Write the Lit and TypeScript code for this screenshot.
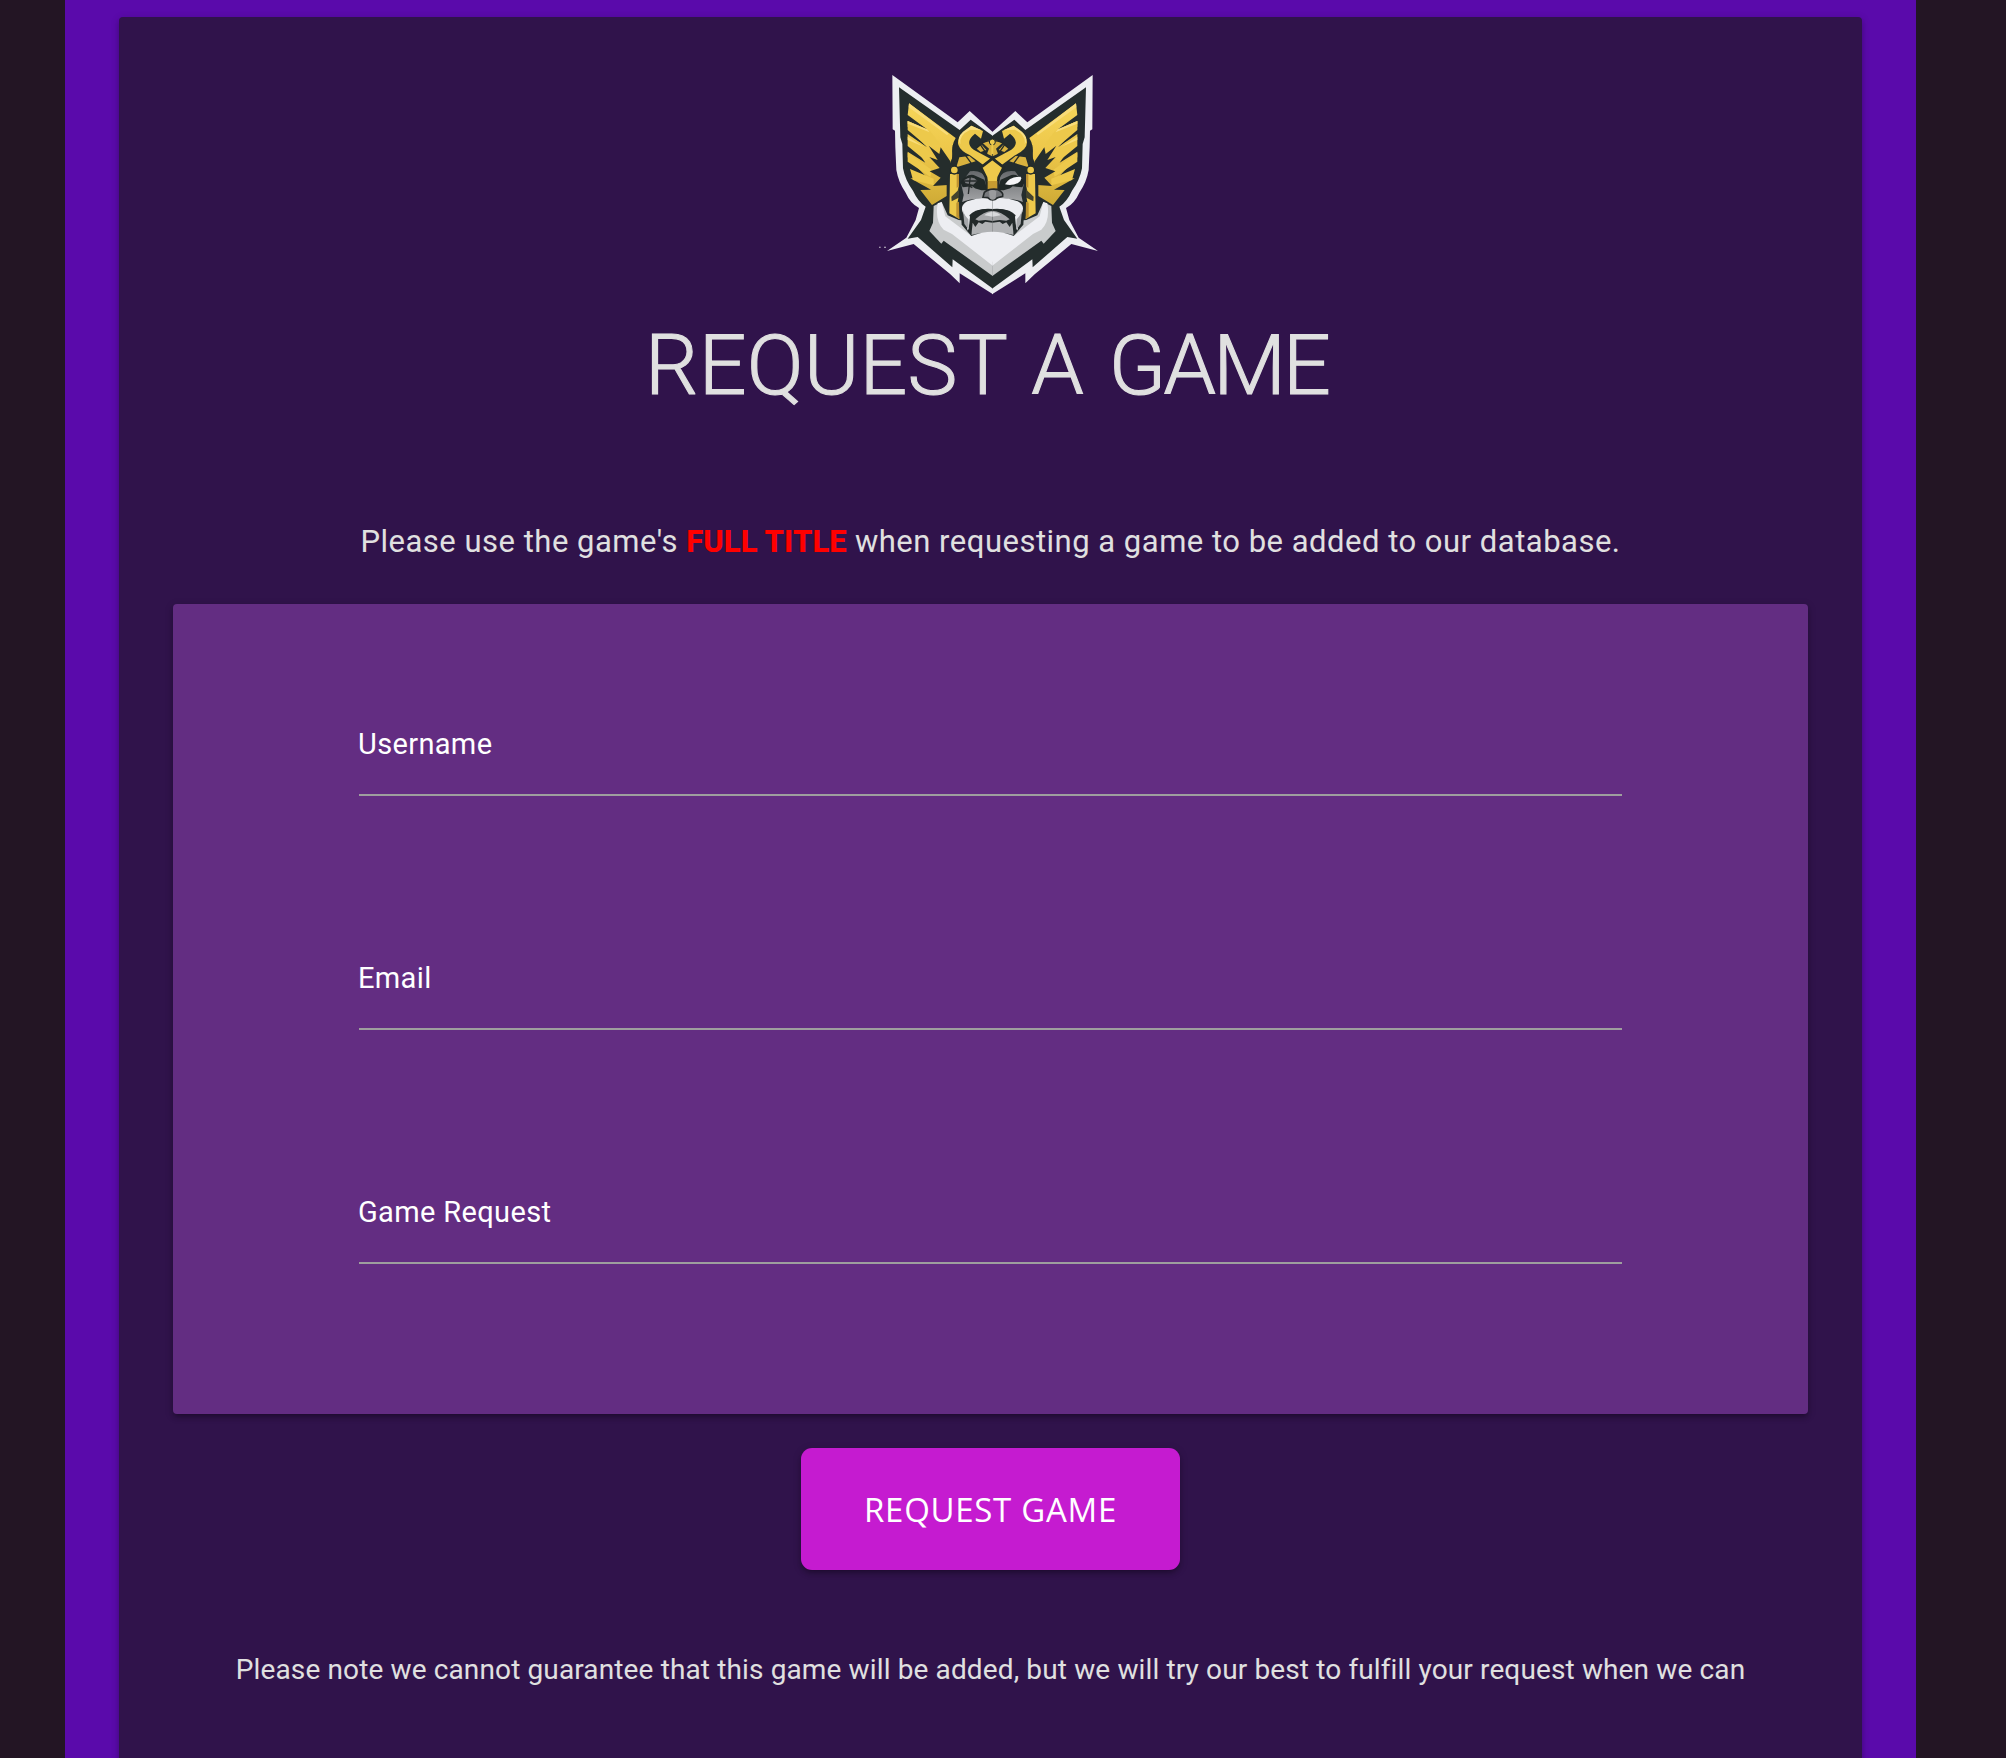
import { LitElement, html, css, svg } from "lit";
import { customElement, property } from "lit/decorators.js";

@customElement("warrior-logo")
export class WarriorLogo extends LitElement {
  static styles = css`
    :host { display: block; width: 240px; height: 250px; }
    svg { display: block; }
  `;

  private side() {
    return svg`
      <path fill="#edeef2" d="M368 217 L298 153 L262 187 L66 45 L67 208 L74 212 L75 262 L78 330 Q84 366 106 398 Q120 430 146 444 L136 480 L108 533 L50 573 L130 552 L240 643 L268 670 L268 640 L368 703 Z"/>
      <path fill="#242d2d" d="M368 228 L350 215 L301 179 L268 210 L86 82 L90 232 L96 252 L98 325 Q105 362 128 392 Q143 425 166 440 L152 480 L112 536 L142 531 L246 622 L247 598 L368 686 Z"/>
      <path fill="url(#gold)" d="M116 130 L256 234 Q241 258 247 290 L236 318 L229 340 L229 408 L185 435 L150 390 L182 389 L120 355 L172 355 L112 292 L112 275 L165 308 L112 230 L112 222 L170 262 L112 200 L112 183 L170 208 L112 165 Z"/>
      <path fill="#edc94b" d="M112 183 L180 214 L210 255 L165 255 L112 210 Z M112 230 L150 248 L188 288 L166 302 L112 258 Z M112 278 L185 330 L180 350 L112 305 Z M119 327 L190 356 L190 376 L128 360 Z"/>
      <path fill="#f8dc79" d="M116 130 L235 221 L230 225 L115 142 Z M112 183 L170 208 L178 217 L112 191 Z M112 230 L160 260 L112 240 Z"/>
      <path fill="#252d2c" d="M175 257 L207 282 L211 262 L240 304 L243 325 L233 354 L232 375 L188 378 L211 353 L178 334 L208 324 L177 291 L202 300 Z"/>
      <path fill="#262d2c" d="M277 218 L248 256 L244 310 L258 310 L278 268 Z"/>
      <path fill="#edc94b" d="M303 197 L338 213 L332 236 L314 221 Q281 247 310 269 L360 296 L338 314 L299 286 Q242 258 275 221 Z"/>
      <path fill="#f8df82" d="M303 197 L334 211 L300 209 Q265 225 270 253 Q257 234 278 215 Z"/>
      <path fill="#d9b23e" d="M267 292 L297 288 L316 304 L258 322 Z M319 266 L334 254 L348 270 L331 276 Z M338 250 Q350 240 366 241 L366 289 L350 281 L356 266 Z"/>
      <path stroke="#242b29" stroke-width="4" fill="none" d="M286 287 L303 310 M330 254 L350 283 M318 264 Q333 242 366 242"/>
      <path fill="#edc94b" d="M239 342 L266 342 L266 405 L262 425 L267 477 L237 460 Z"/>
      <path fill="#242b29" d="M266 374 L262 392 L243 410 L244 424 L268 412 Z" opacity=".85"/>
      <path fill="#bd9130" d="M259 342 L266 342 L266 378 L259 384 Z M258 428 L266 425 L267 477 L258 471 Z"/>
      <circle cx="252" cy="330" r="12" fill="#edc94b" stroke="#222b29" stroke-width="4"/>
      <path fill="url(#face)" d="M299 334 Q334 328 350 358 L366 394 L366 429 L304 422 L275 429 L280 405 L272 370 Z"/>
      <path fill="#202827" d="M270 367 Q287 341 310 345 L342 359 L352 391 L333 391 Q311 386 306 379 L277 382 Z"/>
    `;
  }

  private beard() {
    return svg`
      <path fill="#c9cbcc" d="M214 426 L190 438 L188 488 L177 513 L213 551 L220 542 L367 648 L367 490 L265 480 L232 466 Z"/>
      <path fill="#edeef2" d="M214 426 L202 430 Q193 485 220 509 L245 522 L367 617 L367 480 L304 529 L225 469 Z"/>
      <path fill="#242b2b" d="M303 528 L274 494 L270 428 Q314 408 367 421 L367 530 Z"/>
      <path fill="#b0b2b4" d="M300 490 L367 480 L367 525 Q337 514 303 525 Z"/>
      <path fill="#ecedf1" d="M367 416 Q330 410 291 424 Q264 438 282 466 L292 512 L303 480 L297 466 Q318 441 367 450 Z"/>
      <path fill="#a4a6a9" d="M277 440 Q276 460 294 478 L296 510 L282 492 Z"/>
      <path fill="#222929" d="M367 447 Q318 442 299 470 L296 500 L303 526 L307 488 L315 501 L325 487 L336 492 L345 485 L367 488 Z"/>
      <path fill="#a5a6a8" d="M367 452 Q340 454 315 478 L325 482 L345 480 L367 483 Z"/>
      <path fill="#d8d9db" d="M367 455 Q350 457 342 466 L367 470 Z"/>
    `;
  }

  render() {
    return html`<svg width="240" height="250" viewBox="2 0 720 750" aria-hidden="true">
      <defs>
        <linearGradient id="gold" x1="0" y1="0" x2="0" y2="1">
          <stop offset="0" stop-color="#f5d65a"/><stop offset=".5" stop-color="#edc649"/><stop offset="1" stop-color="#ceaa35"/>
        </linearGradient>
        <linearGradient id="face" x1="0" y1="0" x2="0" y2="1">
          <stop offset="0" stop-color="#66696c"/><stop offset="1" stop-color="#a5a6a8"/>
        </linearGradient>
      </defs>
      ${this.side()}
      <g transform="matrix(-1 0 0 1 733 0)">${this.side()}</g>
      ${this.beard()}
      <g transform="matrix(-1 0 0 1 733 0)">${this.beard()}</g>
      <path fill="#edeef2" d="M303 528 Q367 502 431 528 L367 606 Z"/>
      <circle cx="366" cy="246" r="9" fill="#edc94b" stroke="#222b29" stroke-width="3"/>
      <path stroke="#edc94b" stroke-width="6" d="M366 252 V282"/>
      <path fill="#edc94b" stroke="#242b29" stroke-width="8" d="M366 296 L400 322 L385 352 L381 390 L352 390 L347 352 L332 322 Z"/>
      <path fill="#c69b31" d="M352 363 H381 V389 H352 Z"/>
      <path fill="#77797c" stroke="#252a2a" stroke-width="5" d="M342 397 Q355 385 380 388 Q402 398 397 409 L382 413 Q367 427 352 413 L338 412 Z"/>
      <path fill="#9a9b9d" d="M356 393 Q367 387 378 394 L376 415 Q367 424 358 415 Z"/>
      <path fill="#77797c" d="M281 361 Q304 344 321 362 L309 374 L286 370 Z"/>
      <path stroke="#252a2a" stroke-width="4" fill="none" d="M279 363 L322 363 M300 348 L294 402 M286 372 L306 383"/>
      <path fill="#f5f5f7" d="M404 373 Q417 350 451 350 Q457 359 443 369 Q423 379 404 373 Z"/>
      <path fill="#c6c4cd" d="M26 560 h5 v3 h-5 z M41 560 h6 v3 h-6 z"/>
    </svg>`;
  }
}

@customElement("text-field")
export class TextField extends LitElement {
  @property() label = "";
  static styles = css`
    :host { display: block; height: 104px; margin-bottom: 130px; border-bottom: 2px solid #9e9e9e; box-sizing: border-box; }
    .label { display: block; margin-left: -1px; font-size: 29px; line-height: 40px; padding-top: 32px; color: #fff; letter-spacing: 0.35px; white-space: nowrap; }
  `;
  render() { return html`<label class="label">${this.label}</label>`; }
}

@customElement("app-root")
export class AppRoot extends LitElement {
  static styles = css`
    :host { display: block; height: 1758px; overflow: hidden; background: #231524; color: #e0e0e0; font-family: Roboto, sans-serif; }
    * { box-sizing: border-box; }
    .shell { margin: 0 90px 0 65px; height: 1758px; padding: 17px 54px 0; background: #5a0aab; }
    .card { height: 1800px; padding: 43px 54px 0; border-radius: 4px; background: #30134b; display: flex; flex-direction: column; align-items: center; }
    .card, .form { box-shadow: 0 4px 4px rgba(0,0,0,.14), 0 5px 2px -4px rgba(0,0,0,.12), 0 2px 9px rgba(0,0,0,.2); }
    .logo { flex: none; }
    h1 { margin: 6px 0 0; height: 100px; line-height: 100px; font-size: 84px; font-weight: 300; letter-spacing: .3px; word-spacing: 4px; padding-right: 8px; -webkit-text-stroke: 1.1px #e0e0e0; white-space: nowrap; }
    h1 .tight { letter-spacing: -2.8px; }
    p { margin: 0; white-space: nowrap; line-height: 40px; font-weight: 400; }
    .intro { margin-top: 106px; font-size: 31px; letter-spacing: .5px; }
    .intro b { color: #f00; font-weight: 800; letter-spacing: .1px; }
    .form { width: 100%; height: 810px; margin-top: 42px; padding: 88px 186px 0; border-radius: 4px; background: #632d82; flex: none; }
    .btn { margin: 34px 0 0; flex: none; width: 379px; height: 122px; border: 0; padding: 2px 0 0; border-radius: 11px; background: #c51bd0; color: #fff; font: 400 33px/120px "Open Sans", sans-serif; letter-spacing: .7px; box-shadow: 0 4px 4px rgba(0,0,0,.14), 0 5px 2px -4px rgba(0,0,0,.12), 0 2px 9px rgba(0,0,0,.2); }
    .note { margin-top: 80px; font-size: 28px; letter-spacing: .13px; }
  `;
  render() {
    return html`<main class="shell"><section class="card">
      <warrior-logo class="logo"></warrior-logo>
      <h1>REQUEST A <span class="tight">GAME</span></h1>
      <p class="intro">Please use the game's <b>FULL TITLE</b> when requesting a game to be added to our database.</p>
      <div class="form">
        ${["Username", "Email", "Game Request"].map((l) => html`<text-field label=${l}></text-field>`)}
      </div>
      <button class="btn">REQUEST GAME</button>
      <p class="note">Please note we cannot guarantee that this game will be added, but we will try our best to fulfill your request when we can</p>
    </section></main>`;
  }
}
